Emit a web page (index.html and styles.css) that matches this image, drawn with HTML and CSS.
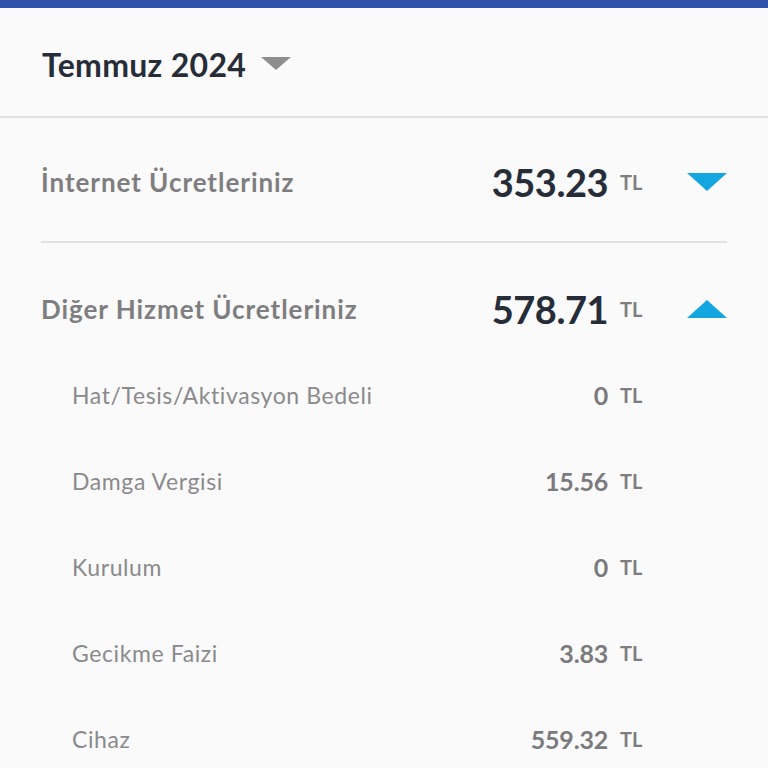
FILE: index.html
```html
<!DOCTYPE html>
<html lang="tr">
<head>
<meta charset="utf-8">
<link rel="stylesheet" href="styles.css">
</head>
<body>
<div class="topbar"></div>
<header class="month">
  <span class="month-title">Temmuz 2024</span>
  <span class="caret"></span>
</header>
<main class="content">
  <section class="group first">
    <div class="group-head">
      <span class="group-label">İnternet Ücretleriniz</span>
      <span class="amount big">353.23</span>
      <span class="cur">TL</span>
      <span class="toggle"><span class="tri down"></span></span>
    </div>
  </section>
  <section class="group second">
    <div class="group-head">
      <span class="group-label">Diğer Hizmet Ücretleriniz</span>
      <span class="amount big">578.71</span>
      <span class="cur">TL</span>
      <span class="toggle"><span class="tri up"></span></span>
    </div>
    <ul class="items">
      <li class="item"><span class="item-label">Hat/Tesis/Aktivasyon Bedeli</span><span class="amount small">0</span><span class="cur">TL</span></li>
      <li class="item"><span class="item-label">Damga Vergisi</span><span class="amount small">15.56</span><span class="cur">TL</span></li>
      <li class="item"><span class="item-label">Kurulum</span><span class="amount small">0</span><span class="cur">TL</span></li>
      <li class="item"><span class="item-label">Gecikme Faizi</span><span class="amount small">3.83</span><span class="cur">TL</span></li>
      <li class="item"><span class="item-label">Cihaz</span><span class="amount small">559.32</span><span class="cur">TL</span></li>
    </ul>
  </section>
</main>
</body>
</html>
```
FILE: styles.css
```css
* { box-sizing: border-box; }
html, body { margin: 0; padding: 0; }
body {
  background: #fafafa;
  font-family: "Lato", "Noto Sans", sans-serif;
  width: 768px;
  height: 768px;
  overflow: hidden;
}
.topbar {
  height: 8px;
  background: #3050aa;
}
.month {
  height: 110px;
  display: flex;
  align-items: center;
  padding-left: 42px;
  padding-top: 4px;
  border-bottom: 2px solid #e2e2e2;
  background: #fafafa;
}
.month-title {
  font-size: 32px;
  font-weight: 700;
  color: #272d38;
  letter-spacing: 0.3px;
}
.caret {
  margin-left: 15px;
  margin-top: -2px;
  width: 0; height: 0;
  border-left: 15px solid transparent;
  border-right: 15px solid transparent;
  border-top: 13px solid #8e8e8e;
}
.content {
  padding: 0 41px;
}
.group-head {
  display: flex;
  align-items: center;
}
.first .group-head {
  height: 125px;
  padding-top: 5px;
  border-bottom: 2px solid #e2e2e2;
}
.second .group-head {
  height: 40px;
  margin-top: 46px;
}
.group-label {
  flex: 1;
  font-size: 26px;
  font-weight: 700;
  color: #7e7e80;
  letter-spacing: 0.95px;
}
.amount {
  font-weight: 700;
  text-align: right;
}
.amount.big {
  font-size: 38px;
  color: #272d38;
  letter-spacing: -0.5px;
}
.amount.small {
  font-size: 25px;
  color: #7b7b7d;
  letter-spacing: -0.2px;
}
.cur {
  width: 24px;
  margin-left: 12px;
  font-size: 20px;
  font-weight: 700;
  color: #7e7e80;
  white-space: nowrap;
}
.toggle {
  width: 83px;
  display: flex;
  justify-content: flex-end;
}
.tri {
  width: 0; height: 0;
  border-left: 20px solid transparent;
  border-right: 20px solid transparent;
}
.tri.down { border-top: 18px solid #13a6e0; }
.tri.up { border-bottom: 18px solid #13a6e0; }
.items {
  list-style: none;
  margin: 23px 0 0;
  padding: 0 83px 0 31px;
}
.item {
  height: 86px;
  display: flex;
  align-items: center;
}
.item-label {
  flex: 1;
  font-size: 23px;
  font-weight: 400;
  color: #8a8a8c;
  letter-spacing: 0.6px;
}
```
